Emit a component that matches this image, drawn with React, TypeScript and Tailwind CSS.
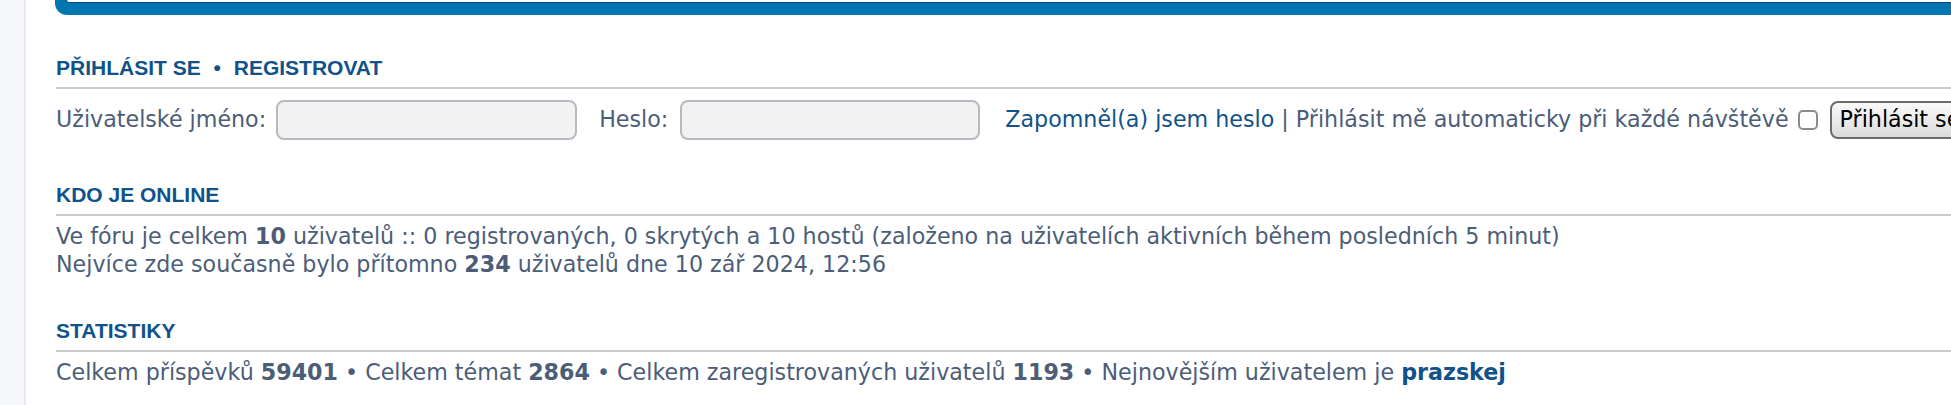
import React from "react";

const body = { fontFamily: '"DejaVu Sans", Verdana, sans-serif' };
const head = { fontFamily: '"Liberation Sans", Arial, sans-serif' };

function Heading({ children }: { children: React.ReactNode }) {
  return (
    <h3
      className="text-[21px] leading-[24px] font-bold uppercase text-[#105289] pb-[7px] border-b-2 border-[#cccccc]"
      style={head}
    >
      {children}
    </h3>
  );
}

export default function App() {
  return (
    <div className="w-[1951px] h-[405px] overflow-hidden bg-white flex" style={body}>
      <div className="w-[26px] shrink-0 bg-[#f5f6fa] border-r-2 border-[#e6e9ef]" />
      <div className="flex-1 min-w-0 pl-[29px] overflow-hidden">
        <div className="-mt-[100px] h-[115px] w-[2000px] rounded-[12px] bg-[#0076b1] px-[11px] pb-[12px]">
          <div className="h-full bg-white border border-[#0b4a74] rounded-[3px]" />
        </div>

        <div className="pl-px">
          <div className="mt-[41px]">
            <Heading>
              Přihlásit se <span className="mx-[7px]">•</span> Registrovat
            </Heading>
          </div>

          <div className="mt-[11px] flex items-center h-[40px] whitespace-nowrap text-[22.2px] text-[#4c5d78]">
            <span className="mr-[10px]">Uživatelské jméno:</span>
            <div className="w-[301px] h-[40px] shrink-0 rounded-[8px] border-2 border-[#b6bbc1] bg-[#f2f2f2]" />
            <span className="ml-[22px] mr-[12px]">Heslo:</span>
            <div className="w-[300px] h-[40px] shrink-0 rounded-[8px] border-2 border-[#b6bbc1] bg-[#f2f2f2]" />
            <span className="ml-[25px]">
              <span className="text-[#105289]">Zapomněl(a) jsem heslo</span> | Přihlásit mě automaticky při každé návštěvě
            </span>
            <div className="ml-[9px] w-[20px] h-[20px] shrink-0 rounded-[5px] border-2 border-[#8c8c8c] bg-white" />
            <div className="ml-[12px] h-[38px] shrink-0 flex items-center px-[8px] rounded-[8px] border-2 border-[#6b6b6b] bg-gradient-to-b from-[#fafafa] to-[#dcdcdc] text-black">
              Přihlásit se
            </div>
          </div>

          <div className="mt-[43px]">
            <Heading>Kdo je online</Heading>
          </div>
          <div className="mt-[6px] text-[22.2px] leading-[28px] text-[#4c5d78] whitespace-nowrap">
            <p>
              Ve fóru je celkem <strong>10</strong> uživatelů :: 0 registrovaných, 0 skrytých a 10 hostů (založeno na uživatelích aktivních během posledních 5 minut)
            </p>
            <p>
              Nejvíce zde současně bylo přítomno <strong>234</strong> uživatelů dne 10 zář 2024, 12:56
            </p>
          </div>

          <div className="mt-[41px]">
            <Heading>Statistiky</Heading>
          </div>
          <div className="mt-[6px] text-[22.2px] leading-[28px] text-[#4c5d78] whitespace-nowrap">
            <p>
              Celkem příspěvků <strong>59401</strong> • Celkem témat <strong>2864</strong> • Celkem zaregistrovaných uživatelů <strong>1193</strong> • Nejnovějším uživatelem je{" "}
              <strong className="text-[#105289]">prazskej</strong>
            </p>
          </div>
        </div>
      </div>
    </div>
  );
}
